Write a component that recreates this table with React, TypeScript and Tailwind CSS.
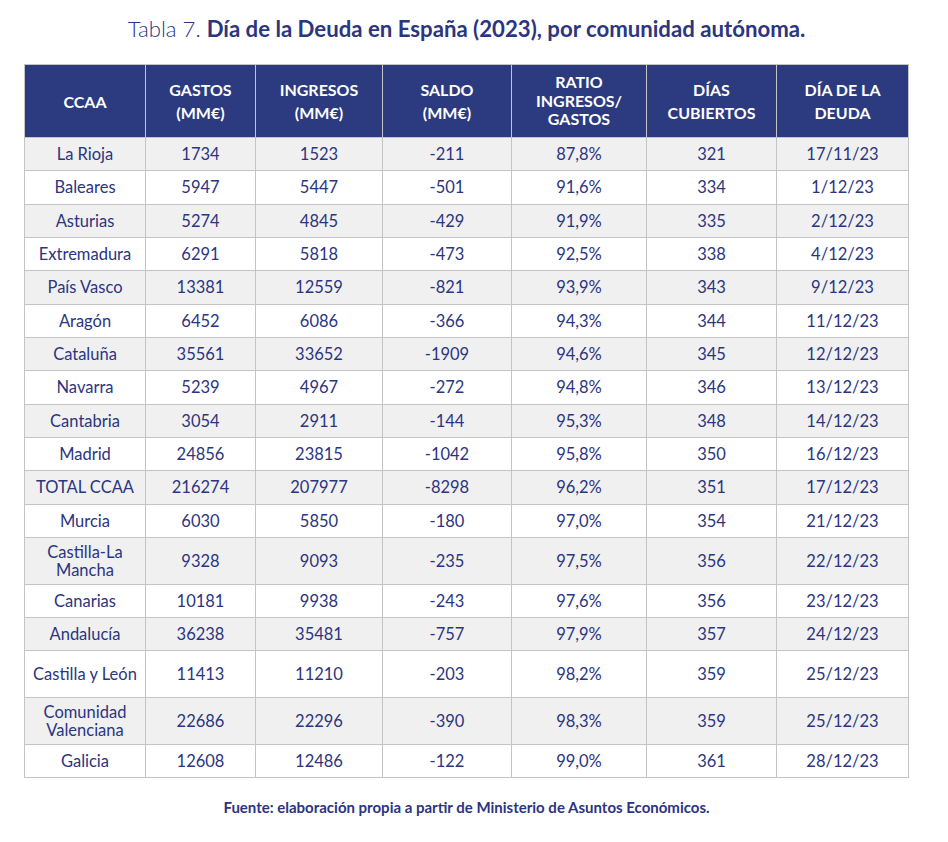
import React from "react";

type Row = {
  name: React.ReactNode;
  g: string;
  i: string;
  s: string;
  r: string;
  d: string;
  f: string;
  tall?: boolean;
};

const rows: Row[] = [
  { name: "La Rioja", g: "1734", i: "1523", s: "-211", r: "87,8%", d: "321", f: "17/11/23" },
  { name: "Baleares", g: "5947", i: "5447", s: "-501", r: "91,6%", d: "334", f: "1/12/23" },
  { name: "Asturias", g: "5274", i: "4845", s: "-429", r: "91,9%", d: "335", f: "2/12/23" },
  { name: "Extremadura", g: "6291", i: "5818", s: "-473", r: "92,5%", d: "338", f: "4/12/23" },
  { name: "País Vasco", g: "13381", i: "12559", s: "-821", r: "93,9%", d: "343", f: "9/12/23" },
  { name: "Aragón", g: "6452", i: "6086", s: "-366", r: "94,3%", d: "344", f: "11/12/23" },
  { name: "Cataluña", g: "35561", i: "33652", s: "-1909", r: "94,6%", d: "345", f: "12/12/23" },
  { name: "Navarra", g: "5239", i: "4967", s: "-272", r: "94,8%", d: "346", f: "13/12/23" },
  { name: "Cantabria", g: "3054", i: "2911", s: "-144", r: "95,3%", d: "348", f: "14/12/23" },
  { name: "Madrid", g: "24856", i: "23815", s: "-1042", r: "95,8%", d: "350", f: "16/12/23" },
  { name: "TOTAL CCAA", g: "216274", i: "207977", s: "-8298", r: "96,2%", d: "351", f: "17/12/23" },
  { name: "Murcia", g: "6030", i: "5850", s: "-180", r: "97,0%", d: "354", f: "21/12/23" },
  {
    name: (
      <>
        Castilla-La
        <br />
        Mancha
      </>
    ),
    g: "9328",
    i: "9093",
    s: "-235",
    r: "97,5%",
    d: "356",
    f: "22/12/23",
    tall: true,
  },
  { name: "Canarias", g: "10181", i: "9938", s: "-243", r: "97,6%", d: "356", f: "23/12/23" },
  { name: "Andalucía", g: "36238", i: "35481", s: "-757", r: "97,9%", d: "357", f: "24/12/23" },
  { name: "Castilla y León", g: "11413", i: "11210", s: "-203", r: "98,2%", d: "359", f: "25/12/23", tall: true },
  {
    name: (
      <>
        Comunidad
        <br />
        Valenciana
      </>
    ),
    g: "22686",
    i: "22296",
    s: "-390",
    r: "98,3%",
    d: "359",
    f: "25/12/23",
    tall: true,
  },
  { name: "Galicia", g: "12608", i: "12486", s: "-122", r: "99,0%", d: "361", f: "28/12/23" },
];

const cols = "grid grid-cols-[120px_109px_126px_128px_134px_129px_131px] gap-px";

function HeadCell({ lines, tight }: { lines: string[]; tight?: boolean }) {
  return (
    <div
      className={`bg-[#2c3a80] text-white font-bold text-[16px] flex flex-col items-center justify-center text-center ${
        tight ? "leading-[18.5px]" : "leading-[23px]"
      }`}
    >
      {lines.map((l, k) => (
        <span key={k}>{l}</span>
      ))}
    </div>
  );
}

export default function App() {
  return (
    <div
      className="w-[948px] h-[842px] bg-white text-[#2b3580]"
      style={{ fontFamily: "Lato, 'Noto Sans', sans-serif" }}
    >
      <div className="ml-[24px] w-[885px] pt-[15px]">
        <div className="text-center text-[22.2px] leading-[28px] text-[#2b3580]">
          <span className="font-light">Tabla 7. </span>
          <span className="font-bold">Día de la Deuda en España (2023), por comunidad autónoma.</span>
        </div>
        <div className="mt-[21px] border border-[#c4c4c4] bg-[#c4c4c4] flex flex-col gap-px">
          <div className={`${cols} h-[72px]`}>
            <HeadCell lines={["CCAA"]} />
            <HeadCell lines={["GASTOS", "(MM€)"]} />
            <HeadCell lines={["INGRESOS", "(MM€)"]} />
            <HeadCell lines={["SALDO", "(MM€)"]} />
            <HeadCell lines={["RATIO", "INGRESOS/", "GASTOS"]} tight />
            <HeadCell lines={["DÍAS", "CUBIERTOS"]} />
            <HeadCell lines={["DÍA DE LA", "DEUDA"]} />
          </div>
          {rows.map((r, idx) => {
            const bg = idx % 2 === 0 ? "bg-[#f0f0f0]" : "bg-white";
            const cell = `${bg} flex items-center justify-center text-center text-[16.5px] leading-[18px]`;
            return (
              <div key={idx} className={`${cols} ${r.tall ? "h-[45.67px]" : "h-[32.33px]"}`}>
                <div className={cell}>
                  <span>{r.name}</span>
                </div>
                <div className={cell}>{r.g}</div>
                <div className={cell}>{r.i}</div>
                <div className={cell}>{r.s}</div>
                <div className={cell}>{r.r}</div>
                <div className={cell}>{r.d}</div>
                <div className={cell}>{r.f}</div>
              </div>
            );
          })}
        </div>
        <div className="mt-[20px] text-center font-bold text-[15px] leading-[18px] text-[#2b3580]">
          Fuente: elaboración propia a partir de Ministerio de Asuntos Económicos.
        </div>
      </div>
    </div>
  );
}
